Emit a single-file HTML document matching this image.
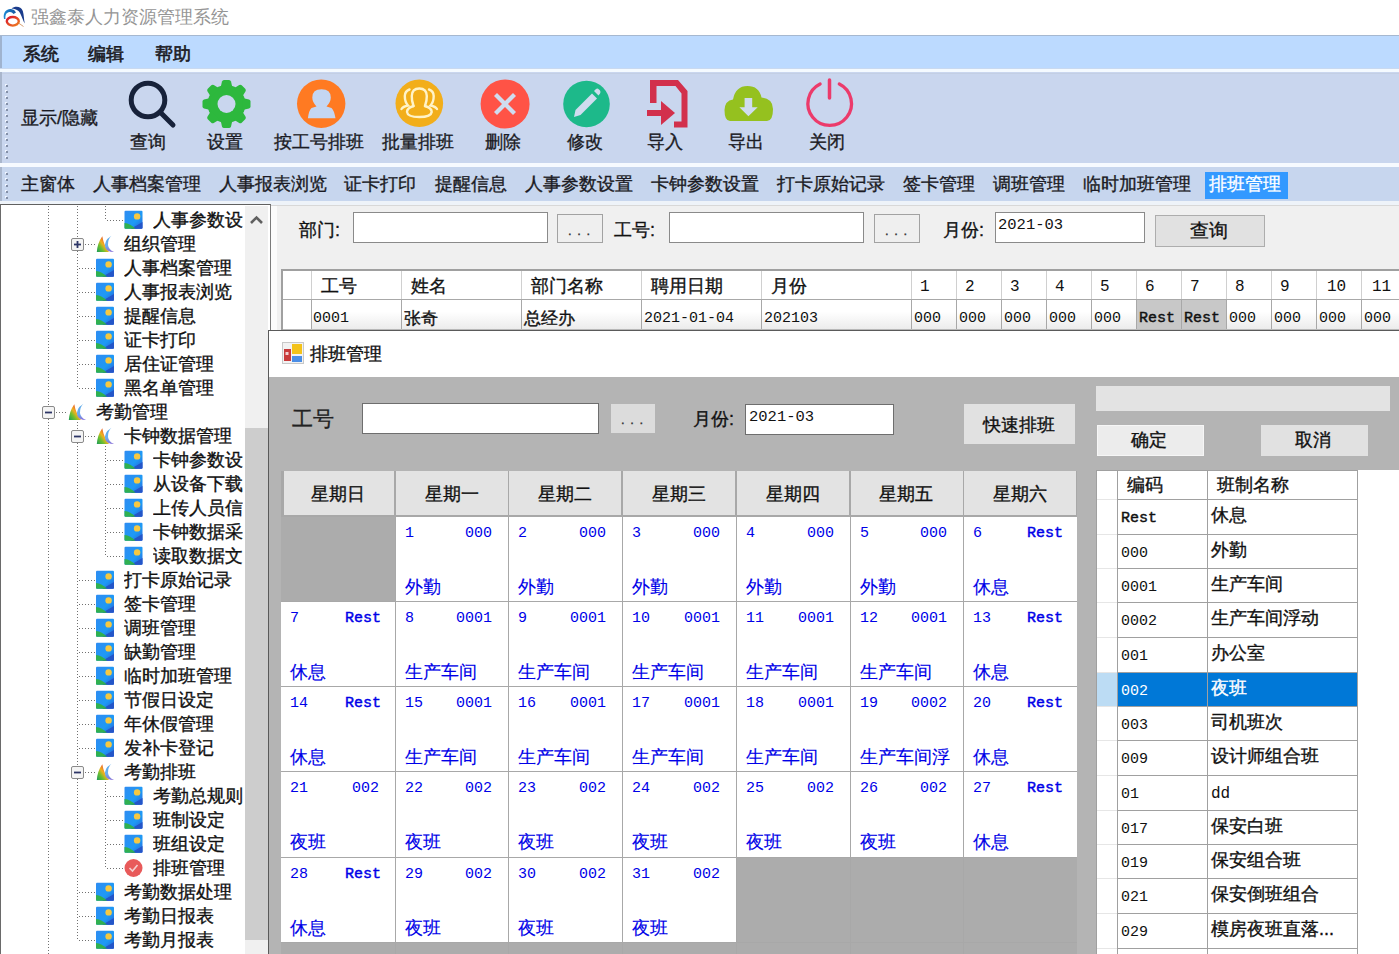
<!DOCTYPE html><html><head><meta charset="utf-8"><style>
html,body{margin:0;padding:0;}
body{width:1399px;height:954px;overflow:hidden;position:relative;background:#fff;font-family:"Liberation Sans", sans-serif;}
.t{position:absolute;white-space:nowrap;line-height:1;-webkit-text-stroke:0.35px currentColor;}
.r{position:absolute;box-sizing:border-box;}
svg{position:absolute;}
</style></head><body><div class="r" style="left:0px;top:0px;width:1399px;height:35px;background:#fff;"></div><svg style="left:0px;top:0px" width="32" height="34" viewBox="0 0 32 34">
<defs><linearGradient id="lg1" x1="0" y1="0" x2="1" y2="0"><stop offset="0" stop-color="#1c8ad6"/><stop offset="1" stop-color="#17569e"/></linearGradient>
<linearGradient id="lg2" x1="0" y1="0" x2="1" y2="1"><stop offset="0" stop-color="#d8122e"/><stop offset="1" stop-color="#f08020"/></linearGradient></defs>
<path d="M4 19 C2.5 12 7 8.5 11 9 C13.5 9.3 15 10.5 16 12.5 L13.5 14 C12.5 12.5 11 11.8 9.5 12 C6.5 12.3 5 15 5.5 19 Z" fill="url(#lg1)"/>
<path d="M11.5 8.5 C15 6 21 6 22.8 11 C24 15 23.8 19 24.8 23.5 C22 18.5 21 13.5 18.5 11 C16.5 9.3 14 8.8 11.5 8.5 Z" fill="#1a3c8c"/>
<ellipse cx="12.8" cy="21.3" rx="6" ry="4.3" fill="none" stroke="url(#lg2)" stroke-width="2.4"/>
<path d="M18.5 23 L23.5 26.5" stroke="#c87a3a" stroke-width="1" opacity="0.7"/>
</svg><div class="t" style="left:31px;top:8px;font-size:18px;color:#959595;-webkit-text-stroke:0;width:198.00px;text-align:justify;text-align-last:justify">强鑫泰人力资源管理系统</div><div class="r" style="left:0px;top:35px;width:1399px;height:34px;background:#bcdaff;"></div><div class="r" style="left:0px;top:35px;width:2px;height:34px;background:#9fb3cf;"></div><div class="r" style="left:0px;top:35px;width:1399px;height:1px;background:#a6b8d0;"></div><div class="t" style="left:23px;top:45px;font-size:18px;color:#1b1b24;-webkit-text-stroke:0.6px currentColor;width:36.00px;text-align:justify;text-align-last:justify">系统</div><div class="t" style="left:88px;top:45px;font-size:18px;color:#1b1b24;-webkit-text-stroke:0.6px currentColor;width:36.00px;text-align:justify;text-align-last:justify">编辑</div><div class="t" style="left:155px;top:45px;font-size:18px;color:#1b1b24;-webkit-text-stroke:0.6px currentColor;width:36.00px;text-align:justify;text-align-last:justify">帮助</div><div class="r" style="left:0px;top:68px;width:1399px;height:1px;background:#c9d9f0;"></div><div class="r" style="left:0px;top:69px;width:1399px;height:3px;background:#f4faff;"></div><div class="r" style="left:0px;top:72px;width:1399px;height:92px;background:#c9d6ee;"></div><div class="r" style="left:0px;top:73px;width:1399px;height:1px;background:#c3cfe4;"></div><div class="r" style="left:0px;top:72px;width:2px;height:92px;background:#a9b6cc;"></div><div class="r" style="left:5px;top:84px;width:2px;height:2px;background:#eef4ff;"></div><div class="r" style="left:6px;top:85px;width:2px;height:2px;background:#8490a8;"></div><div class="r" style="left:5px;top:90px;width:2px;height:2px;background:#eef4ff;"></div><div class="r" style="left:6px;top:91px;width:2px;height:2px;background:#8490a8;"></div><div class="r" style="left:5px;top:96px;width:2px;height:2px;background:#eef4ff;"></div><div class="r" style="left:6px;top:97px;width:2px;height:2px;background:#8490a8;"></div><div class="r" style="left:5px;top:102px;width:2px;height:2px;background:#eef4ff;"></div><div class="r" style="left:6px;top:103px;width:2px;height:2px;background:#8490a8;"></div><div class="r" style="left:5px;top:108px;width:2px;height:2px;background:#eef4ff;"></div><div class="r" style="left:6px;top:109px;width:2px;height:2px;background:#8490a8;"></div><div class="r" style="left:5px;top:114px;width:2px;height:2px;background:#eef4ff;"></div><div class="r" style="left:6px;top:115px;width:2px;height:2px;background:#8490a8;"></div><div class="r" style="left:5px;top:120px;width:2px;height:2px;background:#eef4ff;"></div><div class="r" style="left:6px;top:121px;width:2px;height:2px;background:#8490a8;"></div><div class="r" style="left:5px;top:126px;width:2px;height:2px;background:#eef4ff;"></div><div class="r" style="left:6px;top:127px;width:2px;height:2px;background:#8490a8;"></div><div class="r" style="left:5px;top:132px;width:2px;height:2px;background:#eef4ff;"></div><div class="r" style="left:6px;top:133px;width:2px;height:2px;background:#8490a8;"></div><div class="r" style="left:5px;top:138px;width:2px;height:2px;background:#eef4ff;"></div><div class="r" style="left:6px;top:139px;width:2px;height:2px;background:#8490a8;"></div><div class="r" style="left:5px;top:144px;width:2px;height:2px;background:#eef4ff;"></div><div class="r" style="left:6px;top:145px;width:2px;height:2px;background:#8490a8;"></div><div class="r" style="left:5px;top:150px;width:2px;height:2px;background:#eef4ff;"></div><div class="r" style="left:6px;top:151px;width:2px;height:2px;background:#8490a8;"></div><div class="r" style="left:5px;top:156px;width:2px;height:2px;background:#eef4ff;"></div><div class="r" style="left:6px;top:157px;width:2px;height:2px;background:#8490a8;"></div><div class="t" style="left:21px;top:109px;font-size:18px;color:#1b1b24;;width:77.02px;text-align:justify;text-align-last:justify">显示/隐藏</div><div class="r" style="left:0px;top:163px;width:1399px;height:4px;background:#f6faff;"></div><div class="r" style="left:0px;top:167px;width:1399px;height:35px;background:#c7d6ee;"></div><div class="r" style="left:0px;top:167px;width:2px;height:35px;background:#a9b6cc;"></div><div class="r" style="left:5px;top:172px;width:2px;height:2px;background:#eef4ff;"></div><div class="r" style="left:6px;top:173px;width:2px;height:2px;background:#8490a8;"></div><div class="r" style="left:5px;top:178px;width:2px;height:2px;background:#eef4ff;"></div><div class="r" style="left:6px;top:179px;width:2px;height:2px;background:#8490a8;"></div><div class="r" style="left:5px;top:184px;width:2px;height:2px;background:#eef4ff;"></div><div class="r" style="left:6px;top:185px;width:2px;height:2px;background:#8490a8;"></div><div class="r" style="left:5px;top:190px;width:2px;height:2px;background:#eef4ff;"></div><div class="r" style="left:6px;top:191px;width:2px;height:2px;background:#8490a8;"></div><div class="r" style="left:5px;top:196px;width:2px;height:2px;background:#eef4ff;"></div><div class="r" style="left:6px;top:197px;width:2px;height:2px;background:#8490a8;"></div><div class="r" style="left:0px;top:201px;width:1399px;height:4px;background:#eef3f9;"></div><svg style="left:120px;top:74px" width="740" height="60" viewBox="120 74 740 60">
<circle cx="148" cy="100" r="16.8" fill="none" stroke="#17223a" stroke-width="5"/>
<line x1="161" y1="113" x2="173" y2="125" stroke="#17223a" stroke-width="5" stroke-linecap="round"/>
<g fill="#2db83d" transform="translate(226.5,104)">
  <circle r="19"/>
  <path d="M-6 -16 L-4.5 -22.5 Q-4 -24 -2.5 -24 L2.5 -24 Q4 -24 4.5 -22.5 L6 -16 Z" transform="rotate(0)"/><path d="M-6 -16 L-4.5 -22.5 Q-4 -24 -2.5 -24 L2.5 -24 Q4 -24 4.5 -22.5 L6 -16 Z" transform="rotate(45)"/><path d="M-6 -16 L-4.5 -22.5 Q-4 -24 -2.5 -24 L2.5 -24 Q4 -24 4.5 -22.5 L6 -16 Z" transform="rotate(90)"/><path d="M-6 -16 L-4.5 -22.5 Q-4 -24 -2.5 -24 L2.5 -24 Q4 -24 4.5 -22.5 L6 -16 Z" transform="rotate(135)"/><path d="M-6 -16 L-4.5 -22.5 Q-4 -24 -2.5 -24 L2.5 -24 Q4 -24 4.5 -22.5 L6 -16 Z" transform="rotate(180)"/><path d="M-6 -16 L-4.5 -22.5 Q-4 -24 -2.5 -24 L2.5 -24 Q4 -24 4.5 -22.5 L6 -16 Z" transform="rotate(225)"/><path d="M-6 -16 L-4.5 -22.5 Q-4 -24 -2.5 -24 L2.5 -24 Q4 -24 4.5 -22.5 L6 -16 Z" transform="rotate(270)"/><path d="M-6 -16 L-4.5 -22.5 Q-4 -24 -2.5 -24 L2.5 -24 Q4 -24 4.5 -22.5 L6 -16 Z" transform="rotate(315)"/>
  <circle r="9" fill="#c9d6ee"/>
</g>
<circle cx="321.2" cy="103.7" r="24.2" fill="#ff7a22"/>
<path d="M316.5 106.5 Q312.3 102 312.3 97.5 Q312.3 89.2 321.5 89.2 Q330.8 89.2 330.8 97.5 Q330.8 102 326.5 106.5 L331.5 108 Q334 110 335.5 118.3 L307.9 118.3 Q309 110 311.5 108 Z" fill="#c4d6f2"/>
<circle cx="419.3" cy="103.3" r="23.8" fill="#f2ae1a"/>
<g fill="none" stroke="#fff3c8" stroke-width="2.4" stroke-linecap="round">
<path d="M413.5 106 Q411.5 100 411.8 96 Q412 88.5 419.3 88.5 Q426.6 88.5 426.8 96 Q427 100 425 106"/>
<path d="M413.5 106 Q407 108 407 112 Q407.5 117 419.3 117 Q431 117 431.7 112 Q431.7 108 425 106"/>
<path d="M409.5 89.5 Q405 91 404.8 96 Q404.8 102 408 105.5 Q403 106.5 401.5 109"/>
<path d="M429 89.5 Q433.5 91 433.7 96 Q433.7 102 430.5 105.5 Q435.5 106.5 437 109"/>
</g>
<circle cx="505.1" cy="104" r="24.5" fill="#ff5346"/>
<g stroke="#cfdcef" stroke-width="4.2" stroke-linecap="butt">
<line x1="495.5" y1="94.5" x2="514.5" y2="113.5"/><line x1="514.5" y1="94.5" x2="495.5" y2="113.5"/>
</g>
<circle cx="586.5" cy="104" r="23.3" fill="#1db98a"/>
<path d="M574 117 L575.5 110 L592 93.5 L597 98.5 L580.5 115 Z" fill="#cfdcef"/>
<path d="M594 91 L596 89 Q597.5 88 599 89.5 L600 90.5 Q601 92 600 93.5 L598.5 95.5 Z" fill="#cfdcef"/>
<g fill="#d2304c">
<path d="M650 80 L678 80 L687.5 91 L687.5 127.5 L674 127.5 L674 121.5 L681.5 121.5 L681.5 93.5 L675.5 86 L656.5 86 L656.5 103 L650 103 Z"/>
<rect x="647" y="110" width="15" height="6"/>
<path d="M661 101 L675 113 L661 125 Z"/>
</g>
<path d="M730 121 Q724.5 121 724.5 110 Q725 100.5 733 99.5 Q735.5 86 747.5 86 Q759 86 761.5 97.5 Q772.8 98.5 773 109 Q773 121 767 121 Z" fill="#95c11f"/><path d="M744.6 98 L752.2 98 L752.2 107.3 L757.7 107.3 L748.4 116.2 L739.4 107.3 L744.6 107.3 Z" fill="#cfdcef"/>
<path d="M820.1 84 A21.8 21.8 0 1 0 839.3 84" fill="none" stroke="#ec3b6b" stroke-width="3.3" stroke-linecap="round"/>
<line x1="829.5" y1="80" x2="829.5" y2="98" stroke="#ec3b6b" stroke-width="3.5" stroke-linecap="round"/>
</svg><div class="t" style="left:130px;top:133px;font-size:18px;color:#1b1b24;;width:36.00px;text-align:justify;text-align-last:justify">查询</div><div class="t" style="left:207px;top:133px;font-size:18px;color:#1b1b24;;width:36.00px;text-align:justify;text-align-last:justify">设置</div><div class="t" style="left:274px;top:133px;font-size:18px;color:#1b1b24;;width:90.00px;text-align:justify;text-align-last:justify">按工号排班</div><div class="t" style="left:382px;top:133px;font-size:18px;color:#1b1b24;;width:72.00px;text-align:justify;text-align-last:justify">批量排班</div><div class="t" style="left:485px;top:133px;font-size:18px;color:#1b1b24;;width:36.00px;text-align:justify;text-align-last:justify">删除</div><div class="t" style="left:567px;top:133px;font-size:18px;color:#1b1b24;;width:36.00px;text-align:justify;text-align-last:justify">修改</div><div class="t" style="left:647px;top:133px;font-size:18px;color:#1b1b24;;width:36.00px;text-align:justify;text-align-last:justify">导入</div><div class="t" style="left:728px;top:133px;font-size:18px;color:#1b1b24;;width:36.00px;text-align:justify;text-align-last:justify">导出</div><div class="t" style="left:809px;top:133px;font-size:18px;color:#1b1b24;;width:36.00px;text-align:justify;text-align-last:justify">关闭</div><div class="t" style="left:21px;top:175px;font-size:18px;color:#1b1b24;;width:54.00px;text-align:justify;text-align-last:justify">主窗体</div><div class="t" style="left:93px;top:175px;font-size:18px;color:#1b1b24;;width:108.00px;text-align:justify;text-align-last:justify">人事档案管理</div><div class="t" style="left:219px;top:175px;font-size:18px;color:#1b1b24;;width:108.00px;text-align:justify;text-align-last:justify">人事报表浏览</div><div class="t" style="left:344px;top:175px;font-size:18px;color:#1b1b24;;width:72.00px;text-align:justify;text-align-last:justify">证卡打印</div><div class="t" style="left:435px;top:175px;font-size:18px;color:#1b1b24;;width:72.00px;text-align:justify;text-align-last:justify">提醒信息</div><div class="t" style="left:525px;top:175px;font-size:18px;color:#1b1b24;;width:108.00px;text-align:justify;text-align-last:justify">人事参数设置</div><div class="t" style="left:651px;top:175px;font-size:18px;color:#1b1b24;;width:108.00px;text-align:justify;text-align-last:justify">卡钟参数设置</div><div class="t" style="left:777px;top:175px;font-size:18px;color:#1b1b24;;width:108.00px;text-align:justify;text-align-last:justify">打卡原始记录</div><div class="t" style="left:903px;top:175px;font-size:18px;color:#1b1b24;;width:72.00px;text-align:justify;text-align-last:justify">签卡管理</div><div class="t" style="left:993px;top:175px;font-size:18px;color:#1b1b24;;width:72.00px;text-align:justify;text-align-last:justify">调班管理</div><div class="t" style="left:1083px;top:175px;font-size:18px;color:#1b1b24;;width:108.00px;text-align:justify;text-align-last:justify">临时加班管理</div><div class="r" style="left:1205px;top:172px;width:83px;height:27px;background:#3399ff;"></div><div class="t" style="left:1209px;top:175px;font-size:18px;color:#ffffff;;width:72.00px;text-align:justify;text-align-last:justify">排班管理</div><div class="r" style="left:0px;top:204px;width:271px;height:750px;background:#ffffff;border-top:1.5px solid #606060;border-right:1px solid #7a7a7a;border-left:1px solid #6a6a6a"></div><div class="r" style="left:245px;top:206px;width:23px;height:748px;background:#f0f0f0;"></div><div class="r" style="left:245px;top:428px;width:23px;height:512px;background:#cdcdcd;"></div><svg style="left:248px;top:213px" width="17" height="14" viewBox="0 0 17 14"><path d="M3 10 L8.5 4.5 L14 10" fill="none" stroke="#606060" stroke-width="2.6"/></svg><svg style="left:0px;top:206px" width="245" height="748" viewBox="0 206 245 748"><defs><linearGradient id="gimg" x1="0" y1="0" x2="1" y2="1"><stop offset="0" stop-color="#2f8cf2"/><stop offset="0.6" stop-color="#1e9af5"/><stop offset="1" stop-color="#2a5fd8"/></linearGradient><linearGradient id="gk1" x1="0" y1="1" x2="1" y2="0"><stop offset="0" stop-color="#1a9a5a"/><stop offset="0.3" stop-color="#6cc030"/><stop offset="0.5" stop-color="#f0b020"/><stop offset="0.75" stop-color="#e85a30"/><stop offset="1" stop-color="#c83a5a"/></linearGradient><linearGradient id="gk2" x1="0" y1="0" x2="0" y2="1"><stop offset="0" stop-color="#5aa8e8"/><stop offset="0.6" stop-color="#6ab0f0"/><stop offset="1" stop-color="#8a70d8"/></linearGradient></defs><line x1="48.5" y1="206" x2="48.5" y2="954" stroke="#707070" stroke-width="1" stroke-dasharray="1 2"/><line x1="77.5" y1="206" x2="77.5" y2="389" stroke="#707070" stroke-width="1" stroke-dasharray="1 2"/><line x1="77.5" y1="422" x2="77.5" y2="430" stroke="#707070" stroke-width="1" stroke-dasharray="1 2"/><line x1="77.5" y1="443" x2="77.5" y2="766" stroke="#707070" stroke-width="1" stroke-dasharray="1 2"/><line x1="77.5" y1="779" x2="77.5" y2="941" stroke="#707070" stroke-width="1" stroke-dasharray="1 2"/><line x1="105.5" y1="206" x2="105.5" y2="221" stroke="#707070" stroke-width="1" stroke-dasharray="1 2"/><line x1="105.5" y1="446" x2="105.5" y2="557" stroke="#707070" stroke-width="1" stroke-dasharray="1 2"/><line x1="105.5" y1="782" x2="105.5" y2="869" stroke="#707070" stroke-width="1" stroke-dasharray="1 2"/><line x1="48.5" y1="406" x2="48.5" y2="419" stroke="#fff" stroke-width="1"/><line x1="107.0" y1="220.5" x2="123.5" y2="220.5" stroke="#707070" stroke-width="1" stroke-dasharray="1 2"/><rect x="124.5" y="210.7" width="18" height="18" rx="1" fill="url(#gimg)"/><path d="M130.5 229 L142.5 222 L142.5 227.7 Q142.5 228.7 141.5 228.7 Z" fill="#2456c8"/><path d="M124.5 223 Q130.5 223.5 135.5 228.7 L125.5 228.7 Q124.5 228.7 124.5 227.7 Z" fill="#30b050"/><circle cx="137.1" cy="216.4" r="3.2" fill="#f5c842"/><line x1="85.0" y1="244.5" x2="95" y2="244.5" stroke="#707070" stroke-width="1" stroke-dasharray="1 2"/><rect x="71.5" y="238.5" width="12" height="12" rx="1.5" fill="#f4f4f4" stroke="#8a8a8a"/><line x1="74.0" y1="244.5" x2="81.0" y2="244.5" stroke="#2d3566" stroke-width="1.8"/><line x1="77.5" y1="241" x2="77.5" y2="248" stroke="#2d3566" stroke-width="1.8"/><path d="M96.8 252 Q97.5 243 102.3 236.3 Q104 246 109 252 Z" fill="url(#gk1)"/><path d="M111.5 235.7 Q103 241 105.5 248 Q107.5 252.2 114 252 Q108.5 249.5 108 245 Q107.8 239 111.5 235.7 Z" fill="url(#gk2)"/><line x1="79.0" y1="268.5" x2="95" y2="268.5" stroke="#707070" stroke-width="1" stroke-dasharray="1 2"/><rect x="96" y="258.7" width="18" height="18" rx="1" fill="url(#gimg)"/><path d="M102 277 L114 270 L114 275.7 Q114 276.7 113 276.7 Z" fill="#2456c8"/><path d="M96 271 Q102 271.5 107 276.7 L97 276.7 Q96 276.7 96 275.7 Z" fill="#30b050"/><circle cx="108.6" cy="264.4" r="3.2" fill="#f5c842"/><line x1="79.0" y1="292.5" x2="95" y2="292.5" stroke="#707070" stroke-width="1" stroke-dasharray="1 2"/><rect x="96" y="282.7" width="18" height="18" rx="1" fill="url(#gimg)"/><path d="M102 301 L114 294 L114 299.7 Q114 300.7 113 300.7 Z" fill="#2456c8"/><path d="M96 295 Q102 295.5 107 300.7 L97 300.7 Q96 300.7 96 299.7 Z" fill="#30b050"/><circle cx="108.6" cy="288.4" r="3.2" fill="#f5c842"/><line x1="79.0" y1="316.5" x2="95" y2="316.5" stroke="#707070" stroke-width="1" stroke-dasharray="1 2"/><rect x="96" y="306.7" width="18" height="18" rx="1" fill="url(#gimg)"/><path d="M102 325 L114 318 L114 323.7 Q114 324.7 113 324.7 Z" fill="#2456c8"/><path d="M96 319 Q102 319.5 107 324.7 L97 324.7 Q96 324.7 96 323.7 Z" fill="#30b050"/><circle cx="108.6" cy="312.4" r="3.2" fill="#f5c842"/><line x1="79.0" y1="340.5" x2="95" y2="340.5" stroke="#707070" stroke-width="1" stroke-dasharray="1 2"/><rect x="96" y="330.7" width="18" height="18" rx="1" fill="url(#gimg)"/><path d="M102 349 L114 342 L114 347.7 Q114 348.7 113 348.7 Z" fill="#2456c8"/><path d="M96 343 Q102 343.5 107 348.7 L97 348.7 Q96 348.7 96 347.7 Z" fill="#30b050"/><circle cx="108.6" cy="336.4" r="3.2" fill="#f5c842"/><line x1="79.0" y1="364.5" x2="95" y2="364.5" stroke="#707070" stroke-width="1" stroke-dasharray="1 2"/><rect x="96" y="354.7" width="18" height="18" rx="1" fill="url(#gimg)"/><path d="M102 373 L114 366 L114 371.7 Q114 372.7 113 372.7 Z" fill="#2456c8"/><path d="M96 367 Q102 367.5 107 372.7 L97 372.7 Q96 372.7 96 371.7 Z" fill="#30b050"/><circle cx="108.6" cy="360.4" r="3.2" fill="#f5c842"/><line x1="79.0" y1="388.5" x2="95" y2="388.5" stroke="#707070" stroke-width="1" stroke-dasharray="1 2"/><rect x="96" y="378.7" width="18" height="18" rx="1" fill="url(#gimg)"/><path d="M102 397 L114 390 L114 395.7 Q114 396.7 113 396.7 Z" fill="#2456c8"/><path d="M96 391 Q102 391.5 107 396.7 L97 396.7 Q96 396.7 96 395.7 Z" fill="#30b050"/><circle cx="108.6" cy="384.4" r="3.2" fill="#f5c842"/><line x1="56.0" y1="412.5" x2="67" y2="412.5" stroke="#707070" stroke-width="1" stroke-dasharray="1 2"/><rect x="42.5" y="406.5" width="12" height="12" rx="1.5" fill="#f4f4f4" stroke="#8a8a8a"/><line x1="45.0" y1="412.5" x2="52.0" y2="412.5" stroke="#2d3566" stroke-width="1.8"/><path d="M68.8 420 Q69.5 411 74.3 404.3 Q76 414 81 420 Z" fill="url(#gk1)"/><path d="M83.5 403.7 Q75 409 77.5 416 Q79.5 420.2 86 420 Q80.5 417.5 80 413 Q79.8 407 83.5 403.7 Z" fill="url(#gk2)"/><line x1="85.0" y1="436.5" x2="95" y2="436.5" stroke="#707070" stroke-width="1" stroke-dasharray="1 2"/><rect x="71.5" y="430.5" width="12" height="12" rx="1.5" fill="#f4f4f4" stroke="#8a8a8a"/><line x1="74.0" y1="436.5" x2="81.0" y2="436.5" stroke="#2d3566" stroke-width="1.8"/><path d="M96.8 444 Q97.5 435 102.3 428.3 Q104 438 109 444 Z" fill="url(#gk1)"/><path d="M111.5 427.7 Q103 433 105.5 440 Q107.5 444.2 114 444 Q108.5 441.5 108 437 Q107.8 431 111.5 427.7 Z" fill="url(#gk2)"/><line x1="107.0" y1="460.5" x2="123.5" y2="460.5" stroke="#707070" stroke-width="1" stroke-dasharray="1 2"/><rect x="124.5" y="450.7" width="18" height="18" rx="1" fill="url(#gimg)"/><path d="M130.5 469 L142.5 462 L142.5 467.7 Q142.5 468.7 141.5 468.7 Z" fill="#2456c8"/><path d="M124.5 463 Q130.5 463.5 135.5 468.7 L125.5 468.7 Q124.5 468.7 124.5 467.7 Z" fill="#30b050"/><circle cx="137.1" cy="456.4" r="3.2" fill="#f5c842"/><line x1="107.0" y1="484.5" x2="123.5" y2="484.5" stroke="#707070" stroke-width="1" stroke-dasharray="1 2"/><rect x="124.5" y="474.7" width="18" height="18" rx="1" fill="url(#gimg)"/><path d="M130.5 493 L142.5 486 L142.5 491.7 Q142.5 492.7 141.5 492.7 Z" fill="#2456c8"/><path d="M124.5 487 Q130.5 487.5 135.5 492.7 L125.5 492.7 Q124.5 492.7 124.5 491.7 Z" fill="#30b050"/><circle cx="137.1" cy="480.4" r="3.2" fill="#f5c842"/><line x1="107.0" y1="508.5" x2="123.5" y2="508.5" stroke="#707070" stroke-width="1" stroke-dasharray="1 2"/><rect x="124.5" y="498.7" width="18" height="18" rx="1" fill="url(#gimg)"/><path d="M130.5 517 L142.5 510 L142.5 515.7 Q142.5 516.7 141.5 516.7 Z" fill="#2456c8"/><path d="M124.5 511 Q130.5 511.5 135.5 516.7 L125.5 516.7 Q124.5 516.7 124.5 515.7 Z" fill="#30b050"/><circle cx="137.1" cy="504.4" r="3.2" fill="#f5c842"/><line x1="107.0" y1="532.5" x2="123.5" y2="532.5" stroke="#707070" stroke-width="1" stroke-dasharray="1 2"/><rect x="124.5" y="522.7" width="18" height="18" rx="1" fill="url(#gimg)"/><path d="M130.5 541 L142.5 534 L142.5 539.7 Q142.5 540.7 141.5 540.7 Z" fill="#2456c8"/><path d="M124.5 535 Q130.5 535.5 135.5 540.7 L125.5 540.7 Q124.5 540.7 124.5 539.7 Z" fill="#30b050"/><circle cx="137.1" cy="528.4" r="3.2" fill="#f5c842"/><line x1="107.0" y1="556.5" x2="123.5" y2="556.5" stroke="#707070" stroke-width="1" stroke-dasharray="1 2"/><rect x="124.5" y="546.7" width="18" height="18" rx="1" fill="url(#gimg)"/><path d="M130.5 565 L142.5 558 L142.5 563.7 Q142.5 564.7 141.5 564.7 Z" fill="#2456c8"/><path d="M124.5 559 Q130.5 559.5 135.5 564.7 L125.5 564.7 Q124.5 564.7 124.5 563.7 Z" fill="#30b050"/><circle cx="137.1" cy="552.4" r="3.2" fill="#f5c842"/><line x1="79.0" y1="580.5" x2="95" y2="580.5" stroke="#707070" stroke-width="1" stroke-dasharray="1 2"/><rect x="96" y="570.7" width="18" height="18" rx="1" fill="url(#gimg)"/><path d="M102 589 L114 582 L114 587.7 Q114 588.7 113 588.7 Z" fill="#2456c8"/><path d="M96 583 Q102 583.5 107 588.7 L97 588.7 Q96 588.7 96 587.7 Z" fill="#30b050"/><circle cx="108.6" cy="576.4" r="3.2" fill="#f5c842"/><line x1="79.0" y1="604.5" x2="95" y2="604.5" stroke="#707070" stroke-width="1" stroke-dasharray="1 2"/><rect x="96" y="594.7" width="18" height="18" rx="1" fill="url(#gimg)"/><path d="M102 613 L114 606 L114 611.7 Q114 612.7 113 612.7 Z" fill="#2456c8"/><path d="M96 607 Q102 607.5 107 612.7 L97 612.7 Q96 612.7 96 611.7 Z" fill="#30b050"/><circle cx="108.6" cy="600.4" r="3.2" fill="#f5c842"/><line x1="79.0" y1="628.5" x2="95" y2="628.5" stroke="#707070" stroke-width="1" stroke-dasharray="1 2"/><rect x="96" y="618.7" width="18" height="18" rx="1" fill="url(#gimg)"/><path d="M102 637 L114 630 L114 635.7 Q114 636.7 113 636.7 Z" fill="#2456c8"/><path d="M96 631 Q102 631.5 107 636.7 L97 636.7 Q96 636.7 96 635.7 Z" fill="#30b050"/><circle cx="108.6" cy="624.4" r="3.2" fill="#f5c842"/><line x1="79.0" y1="652.5" x2="95" y2="652.5" stroke="#707070" stroke-width="1" stroke-dasharray="1 2"/><rect x="96" y="642.7" width="18" height="18" rx="1" fill="url(#gimg)"/><path d="M102 661 L114 654 L114 659.7 Q114 660.7 113 660.7 Z" fill="#2456c8"/><path d="M96 655 Q102 655.5 107 660.7 L97 660.7 Q96 660.7 96 659.7 Z" fill="#30b050"/><circle cx="108.6" cy="648.4" r="3.2" fill="#f5c842"/><line x1="79.0" y1="676.5" x2="95" y2="676.5" stroke="#707070" stroke-width="1" stroke-dasharray="1 2"/><rect x="96" y="666.7" width="18" height="18" rx="1" fill="url(#gimg)"/><path d="M102 685 L114 678 L114 683.7 Q114 684.7 113 684.7 Z" fill="#2456c8"/><path d="M96 679 Q102 679.5 107 684.7 L97 684.7 Q96 684.7 96 683.7 Z" fill="#30b050"/><circle cx="108.6" cy="672.4" r="3.2" fill="#f5c842"/><line x1="79.0" y1="700.5" x2="95" y2="700.5" stroke="#707070" stroke-width="1" stroke-dasharray="1 2"/><rect x="96" y="690.7" width="18" height="18" rx="1" fill="url(#gimg)"/><path d="M102 709 L114 702 L114 707.7 Q114 708.7 113 708.7 Z" fill="#2456c8"/><path d="M96 703 Q102 703.5 107 708.7 L97 708.7 Q96 708.7 96 707.7 Z" fill="#30b050"/><circle cx="108.6" cy="696.4" r="3.2" fill="#f5c842"/><line x1="79.0" y1="724.5" x2="95" y2="724.5" stroke="#707070" stroke-width="1" stroke-dasharray="1 2"/><rect x="96" y="714.7" width="18" height="18" rx="1" fill="url(#gimg)"/><path d="M102 733 L114 726 L114 731.7 Q114 732.7 113 732.7 Z" fill="#2456c8"/><path d="M96 727 Q102 727.5 107 732.7 L97 732.7 Q96 732.7 96 731.7 Z" fill="#30b050"/><circle cx="108.6" cy="720.4" r="3.2" fill="#f5c842"/><line x1="79.0" y1="748.5" x2="95" y2="748.5" stroke="#707070" stroke-width="1" stroke-dasharray="1 2"/><rect x="96" y="738.7" width="18" height="18" rx="1" fill="url(#gimg)"/><path d="M102 757 L114 750 L114 755.7 Q114 756.7 113 756.7 Z" fill="#2456c8"/><path d="M96 751 Q102 751.5 107 756.7 L97 756.7 Q96 756.7 96 755.7 Z" fill="#30b050"/><circle cx="108.6" cy="744.4" r="3.2" fill="#f5c842"/><line x1="85.0" y1="772.5" x2="95" y2="772.5" stroke="#707070" stroke-width="1" stroke-dasharray="1 2"/><rect x="71.5" y="766.5" width="12" height="12" rx="1.5" fill="#f4f4f4" stroke="#8a8a8a"/><line x1="74.0" y1="772.5" x2="81.0" y2="772.5" stroke="#2d3566" stroke-width="1.8"/><path d="M96.8 780 Q97.5 771 102.3 764.3 Q104 774 109 780 Z" fill="url(#gk1)"/><path d="M111.5 763.7 Q103 769 105.5 776 Q107.5 780.2 114 780 Q108.5 777.5 108 773 Q107.8 767 111.5 763.7 Z" fill="url(#gk2)"/><line x1="107.0" y1="796.5" x2="123.5" y2="796.5" stroke="#707070" stroke-width="1" stroke-dasharray="1 2"/><rect x="124.5" y="786.7" width="18" height="18" rx="1" fill="url(#gimg)"/><path d="M130.5 805 L142.5 798 L142.5 803.7 Q142.5 804.7 141.5 804.7 Z" fill="#2456c8"/><path d="M124.5 799 Q130.5 799.5 135.5 804.7 L125.5 804.7 Q124.5 804.7 124.5 803.7 Z" fill="#30b050"/><circle cx="137.1" cy="792.4" r="3.2" fill="#f5c842"/><line x1="107.0" y1="820.5" x2="123.5" y2="820.5" stroke="#707070" stroke-width="1" stroke-dasharray="1 2"/><rect x="124.5" y="810.7" width="18" height="18" rx="1" fill="url(#gimg)"/><path d="M130.5 829 L142.5 822 L142.5 827.7 Q142.5 828.7 141.5 828.7 Z" fill="#2456c8"/><path d="M124.5 823 Q130.5 823.5 135.5 828.7 L125.5 828.7 Q124.5 828.7 124.5 827.7 Z" fill="#30b050"/><circle cx="137.1" cy="816.4" r="3.2" fill="#f5c842"/><line x1="107.0" y1="844.5" x2="123.5" y2="844.5" stroke="#707070" stroke-width="1" stroke-dasharray="1 2"/><rect x="124.5" y="834.7" width="18" height="18" rx="1" fill="url(#gimg)"/><path d="M130.5 853 L142.5 846 L142.5 851.7 Q142.5 852.7 141.5 852.7 Z" fill="#2456c8"/><path d="M124.5 847 Q130.5 847.5 135.5 852.7 L125.5 852.7 Q124.5 852.7 124.5 851.7 Z" fill="#30b050"/><circle cx="137.1" cy="840.4" r="3.2" fill="#f5c842"/><line x1="107.0" y1="868.5" x2="123.5" y2="868.5" stroke="#707070" stroke-width="1" stroke-dasharray="1 2"/><circle cx="133.5" cy="868" r="9" fill="#e85a5a"/><path d="M129.5 868 L132.5 871 L137.5 865" fill="none" stroke="#f5d0d0" stroke-width="1.6"/><line x1="79.0" y1="892.5" x2="95" y2="892.5" stroke="#707070" stroke-width="1" stroke-dasharray="1 2"/><rect x="96" y="882.7" width="18" height="18" rx="1" fill="url(#gimg)"/><path d="M102 901 L114 894 L114 899.7 Q114 900.7 113 900.7 Z" fill="#2456c8"/><path d="M96 895 Q102 895.5 107 900.7 L97 900.7 Q96 900.7 96 899.7 Z" fill="#30b050"/><circle cx="108.6" cy="888.4" r="3.2" fill="#f5c842"/><line x1="79.0" y1="916.5" x2="95" y2="916.5" stroke="#707070" stroke-width="1" stroke-dasharray="1 2"/><rect x="96" y="906.7" width="18" height="18" rx="1" fill="url(#gimg)"/><path d="M102 925 L114 918 L114 923.7 Q114 924.7 113 924.7 Z" fill="#2456c8"/><path d="M96 919 Q102 919.5 107 924.7 L97 924.7 Q96 924.7 96 923.7 Z" fill="#30b050"/><circle cx="108.6" cy="912.4" r="3.2" fill="#f5c842"/><line x1="79.0" y1="940.5" x2="95" y2="940.5" stroke="#707070" stroke-width="1" stroke-dasharray="1 2"/><rect x="96" y="930.7" width="18" height="18" rx="1" fill="url(#gimg)"/><path d="M102 949 L114 942 L114 947.7 Q114 948.7 113 948.7 Z" fill="#2456c8"/><path d="M96 943 Q102 943.5 107 948.7 L97 948.7 Q96 948.7 96 947.7 Z" fill="#30b050"/><circle cx="108.6" cy="936.4" r="3.2" fill="#f5c842"/></svg><div class="t" style="left:153px;top:211px;font-size:18px;color:#111;max-width:92px;overflow:hidden;width:90.00px;text-align:justify;text-align-last:justify">人事参数设</div><div class="t" style="left:124px;top:235px;font-size:18px;color:#111;max-width:120px;overflow:hidden;width:72.00px;text-align:justify;text-align-last:justify">组织管理</div><div class="t" style="left:124px;top:259px;font-size:18px;color:#111;max-width:120px;overflow:hidden;width:108.00px;text-align:justify;text-align-last:justify">人事档案管理</div><div class="t" style="left:124px;top:283px;font-size:18px;color:#111;max-width:120px;overflow:hidden;width:108.00px;text-align:justify;text-align-last:justify">人事报表浏览</div><div class="t" style="left:124px;top:307px;font-size:18px;color:#111;max-width:120px;overflow:hidden;width:72.00px;text-align:justify;text-align-last:justify">提醒信息</div><div class="t" style="left:124px;top:331px;font-size:18px;color:#111;max-width:120px;overflow:hidden;width:72.00px;text-align:justify;text-align-last:justify">证卡打印</div><div class="t" style="left:124px;top:355px;font-size:18px;color:#111;max-width:120px;overflow:hidden;width:90.00px;text-align:justify;text-align-last:justify">居住证管理</div><div class="t" style="left:124px;top:379px;font-size:18px;color:#111;max-width:120px;overflow:hidden;width:90.00px;text-align:justify;text-align-last:justify">黑名单管理</div><div class="t" style="left:96px;top:403px;font-size:18px;color:#111;max-width:149px;overflow:hidden;width:72.00px;text-align:justify;text-align-last:justify">考勤管理</div><div class="t" style="left:124px;top:427px;font-size:18px;color:#111;max-width:120px;overflow:hidden;width:108.00px;text-align:justify;text-align-last:justify">卡钟数据管理</div><div class="t" style="left:153px;top:451px;font-size:18px;color:#111;max-width:92px;overflow:hidden;width:90.00px;text-align:justify;text-align-last:justify">卡钟参数设</div><div class="t" style="left:153px;top:475px;font-size:18px;color:#111;max-width:92px;overflow:hidden;width:90.00px;text-align:justify;text-align-last:justify">从设备下载</div><div class="t" style="left:153px;top:499px;font-size:18px;color:#111;max-width:92px;overflow:hidden;width:90.00px;text-align:justify;text-align-last:justify">上传人员信</div><div class="t" style="left:153px;top:523px;font-size:18px;color:#111;max-width:92px;overflow:hidden;width:90.00px;text-align:justify;text-align-last:justify">卡钟数据采</div><div class="t" style="left:153px;top:547px;font-size:18px;color:#111;max-width:92px;overflow:hidden;width:90.00px;text-align:justify;text-align-last:justify">读取数据文</div><div class="t" style="left:124px;top:571px;font-size:18px;color:#111;max-width:120px;overflow:hidden;width:108.00px;text-align:justify;text-align-last:justify">打卡原始记录</div><div class="t" style="left:124px;top:595px;font-size:18px;color:#111;max-width:120px;overflow:hidden;width:72.00px;text-align:justify;text-align-last:justify">签卡管理</div><div class="t" style="left:124px;top:619px;font-size:18px;color:#111;max-width:120px;overflow:hidden;width:72.00px;text-align:justify;text-align-last:justify">调班管理</div><div class="t" style="left:124px;top:643px;font-size:18px;color:#111;max-width:120px;overflow:hidden;width:72.00px;text-align:justify;text-align-last:justify">缺勤管理</div><div class="t" style="left:124px;top:667px;font-size:18px;color:#111;max-width:120px;overflow:hidden;width:108.00px;text-align:justify;text-align-last:justify">临时加班管理</div><div class="t" style="left:124px;top:691px;font-size:18px;color:#111;max-width:120px;overflow:hidden;width:90.00px;text-align:justify;text-align-last:justify">节假日设定</div><div class="t" style="left:124px;top:715px;font-size:18px;color:#111;max-width:120px;overflow:hidden;width:90.00px;text-align:justify;text-align-last:justify">年休假管理</div><div class="t" style="left:124px;top:739px;font-size:18px;color:#111;max-width:120px;overflow:hidden;width:90.00px;text-align:justify;text-align-last:justify">发补卡登记</div><div class="t" style="left:124px;top:763px;font-size:18px;color:#111;max-width:120px;overflow:hidden;width:72.00px;text-align:justify;text-align-last:justify">考勤排班</div><div class="t" style="left:153px;top:787px;font-size:18px;color:#111;max-width:92px;overflow:hidden;width:90.00px;text-align:justify;text-align-last:justify">考勤总规则</div><div class="t" style="left:153px;top:811px;font-size:18px;color:#111;max-width:92px;overflow:hidden;width:72.00px;text-align:justify;text-align-last:justify">班制设定</div><div class="t" style="left:153px;top:835px;font-size:18px;color:#111;max-width:92px;overflow:hidden;width:72.00px;text-align:justify;text-align-last:justify">班组设定</div><div class="t" style="left:153px;top:859px;font-size:18px;color:#111;max-width:92px;overflow:hidden;width:72.00px;text-align:justify;text-align-last:justify">排班管理</div><div class="t" style="left:124px;top:883px;font-size:18px;color:#111;max-width:120px;overflow:hidden;width:108.00px;text-align:justify;text-align-last:justify">考勤数据处理</div><div class="t" style="left:124px;top:907px;font-size:18px;color:#111;max-width:120px;overflow:hidden;width:90.00px;text-align:justify;text-align-last:justify">考勤日报表</div><div class="t" style="left:124px;top:931px;font-size:18px;color:#111;max-width:120px;overflow:hidden;width:90.00px;text-align:justify;text-align-last:justify">考勤月报表</div><div class="r" style="left:271px;top:205px;width:1128px;height:749px;background:#f0f0f0;border-top:1px solid #d8d8d8"></div><div class="r" style="left:271px;top:206px;width:6px;height:748px;background:#fbfbfb;"></div><div class="t" style="left:299px;top:221px;font-size:18px;color:#111;;width:41.02px;text-align:justify;text-align-last:justify">部门:</div><div class="r" style="left:353px;top:212px;width:195px;height:31px;background:#fff;border:1.5px solid #8a8a8a"></div><div class="r" style="left:557px;top:214px;width:46px;height:29px;background:#efefef;border:1.5px solid #a2a2a2"></div><div class="t" style="left:568px;top:224px;font-size:13px;color:#333;letter-spacing:1px">. . .</div><div class="t" style="left:614px;top:221px;font-size:18px;color:#111;;width:41.02px;text-align:justify;text-align-last:justify">工号:</div><div class="r" style="left:669px;top:212px;width:195px;height:31px;background:#fff;border:1.5px solid #8a8a8a"></div><div class="r" style="left:874px;top:214px;width:46px;height:29px;background:#efefef;border:1.5px solid #a2a2a2"></div><div class="t" style="left:885px;top:224px;font-size:13px;color:#333;letter-spacing:1px">. . .</div><div class="t" style="left:943px;top:221px;font-size:18px;color:#111;;width:41.02px;text-align:justify;text-align-last:justify">月份:</div><div class="r" style="left:995px;top:212px;width:150px;height:31px;background:#fff;border:1.5px solid #8a8a8a"></div><div class="t" style="left:998px;top:218px;font-size:15.5px;color:#111;-webkit-text-stroke:0;font-family:'Liberation Mono', monospace">2021-03</div><div class="r" style="left:1155px;top:215px;width:110px;height:32px;background:#e1e1e1;border:1px solid #adadad"></div><div class="t" style="left:1190px;top:221px;font-size:19px;color:#111;;width:38.00px;text-align:justify;text-align-last:justify">查询</div><div class="r" style="left:281px;top:269px;width:1118px;height:62px;background:#ffffff;border-top:2px solid #a0a0a0;border-left:2px solid #a0a0a0"></div><div class="r" style="left:311px;top:271px;width:1px;height:60px;background:#d0d0d0;"></div><div class="r" style="left:401px;top:271px;width:1px;height:60px;background:#d0d0d0;"></div><div class="r" style="left:521px;top:271px;width:1px;height:60px;background:#d0d0d0;"></div><div class="r" style="left:641px;top:271px;width:1px;height:60px;background:#d0d0d0;"></div><div class="r" style="left:761px;top:271px;width:1px;height:60px;background:#d0d0d0;"></div><div class="r" style="left:911px;top:271px;width:1px;height:60px;background:#d0d0d0;"></div><div class="r" style="left:956px;top:271px;width:1px;height:60px;background:#d0d0d0;"></div><div class="r" style="left:1001px;top:271px;width:1px;height:60px;background:#d0d0d0;"></div><div class="r" style="left:1046px;top:271px;width:1px;height:60px;background:#d0d0d0;"></div><div class="r" style="left:1091px;top:271px;width:1px;height:60px;background:#d0d0d0;"></div><div class="r" style="left:1136px;top:271px;width:1px;height:60px;background:#d0d0d0;"></div><div class="r" style="left:1181px;top:271px;width:1px;height:60px;background:#d0d0d0;"></div><div class="r" style="left:1226px;top:271px;width:1px;height:60px;background:#d0d0d0;"></div><div class="r" style="left:1271px;top:271px;width:1px;height:60px;background:#d0d0d0;"></div><div class="r" style="left:1316px;top:271px;width:1px;height:60px;background:#d0d0d0;"></div><div class="r" style="left:1361px;top:271px;width:1px;height:60px;background:#d0d0d0;"></div><div class="r" style="left:1406px;top:271px;width:1px;height:60px;background:#d0d0d0;"></div><div class="r" style="left:1451px;top:271px;width:1px;height:60px;background:#d0d0d0;"></div><div class="r" style="left:283px;top:299px;width:1116px;height:1px;background:#a8a8a8;"></div><div class="r" style="left:283px;top:329px;width:1116px;height:2px;background:#b8b8b8;"></div><div class="r" style="left:311px;top:300px;width:1088px;height:29px;background:linear-gradient(#ffffff 40%, #ececec);"></div><div class="r" style="left:311px;top:300px;width:1px;height:29px;background:#a8a8a8;"></div><div class="r" style="left:401px;top:300px;width:1px;height:29px;background:#a8a8a8;"></div><div class="r" style="left:521px;top:300px;width:1px;height:29px;background:#a8a8a8;"></div><div class="r" style="left:641px;top:300px;width:1px;height:29px;background:#a8a8a8;"></div><div class="r" style="left:761px;top:300px;width:1px;height:29px;background:#a8a8a8;"></div><div class="r" style="left:911px;top:300px;width:1px;height:29px;background:#a8a8a8;"></div><div class="r" style="left:956px;top:300px;width:1px;height:29px;background:#a8a8a8;"></div><div class="r" style="left:1001px;top:300px;width:1px;height:29px;background:#a8a8a8;"></div><div class="r" style="left:1046px;top:300px;width:1px;height:29px;background:#a8a8a8;"></div><div class="r" style="left:1091px;top:300px;width:1px;height:29px;background:#a8a8a8;"></div><div class="r" style="left:1136px;top:300px;width:1px;height:29px;background:#a8a8a8;"></div><div class="r" style="left:1181px;top:300px;width:1px;height:29px;background:#a8a8a8;"></div><div class="r" style="left:1226px;top:300px;width:1px;height:29px;background:#a8a8a8;"></div><div class="r" style="left:1271px;top:300px;width:1px;height:29px;background:#a8a8a8;"></div><div class="r" style="left:1316px;top:300px;width:1px;height:29px;background:#a8a8a8;"></div><div class="r" style="left:1361px;top:300px;width:1px;height:29px;background:#a8a8a8;"></div><div class="r" style="left:1406px;top:300px;width:1px;height:29px;background:#a8a8a8;"></div><div class="r" style="left:1451px;top:300px;width:1px;height:29px;background:#a8a8a8;"></div><div class="t" style="left:321px;top:277px;font-size:18px;color:#111;;width:36.00px;text-align:justify;text-align-last:justify">工号</div><div class="t" style="left:411px;top:277px;font-size:18px;color:#111;;width:36.00px;text-align:justify;text-align-last:justify">姓名</div><div class="t" style="left:531px;top:277px;font-size:18px;color:#111;;width:72.00px;text-align:justify;text-align-last:justify">部门名称</div><div class="t" style="left:651px;top:277px;font-size:18px;color:#111;;width:72.00px;text-align:justify;text-align-last:justify">聘用日期</div><div class="t" style="left:771px;top:277px;font-size:18px;color:#111;;width:36.00px;text-align:justify;text-align-last:justify">月份</div><div class="t" style="left:920px;top:279px;font-size:16px;color:#111;-webkit-text-stroke:0;font-family:'Liberation Mono', monospace">1</div><div class="t" style="left:965px;top:279px;font-size:16px;color:#111;-webkit-text-stroke:0;font-family:'Liberation Mono', monospace">2</div><div class="t" style="left:1010px;top:279px;font-size:16px;color:#111;-webkit-text-stroke:0;font-family:'Liberation Mono', monospace">3</div><div class="t" style="left:1055px;top:279px;font-size:16px;color:#111;-webkit-text-stroke:0;font-family:'Liberation Mono', monospace">4</div><div class="t" style="left:1100px;top:279px;font-size:16px;color:#111;-webkit-text-stroke:0;font-family:'Liberation Mono', monospace">5</div><div class="t" style="left:1145px;top:279px;font-size:16px;color:#111;-webkit-text-stroke:0;font-family:'Liberation Mono', monospace">6</div><div class="t" style="left:1190px;top:279px;font-size:16px;color:#111;-webkit-text-stroke:0;font-family:'Liberation Mono', monospace">7</div><div class="t" style="left:1235px;top:279px;font-size:16px;color:#111;-webkit-text-stroke:0;font-family:'Liberation Mono', monospace">8</div><div class="t" style="left:1280px;top:279px;font-size:16px;color:#111;-webkit-text-stroke:0;font-family:'Liberation Mono', monospace">9</div><div class="t" style="left:1327px;top:279px;font-size:16px;color:#111;-webkit-text-stroke:0;font-family:'Liberation Mono', monospace">10</div><div class="t" style="left:1372px;top:279px;font-size:16px;color:#111;-webkit-text-stroke:0;font-family:'Liberation Mono', monospace">11</div><div class="t" style="left:313px;top:311px;font-size:15px;color:#111;-webkit-text-stroke:0;font-family:'Liberation Mono', monospace">0001</div><div class="t" style="left:404px;top:310px;font-size:17px;color:#111;font-family:'Liberation Sans', sans-serif;width:34.00px;text-align:justify;text-align-last:justify">张奇</div><div class="t" style="left:524px;top:310px;font-size:17px;color:#111;font-family:'Liberation Sans', sans-serif;width:51.00px;text-align:justify;text-align-last:justify">总经办</div><div class="t" style="left:644px;top:311px;font-size:15px;color:#111;-webkit-text-stroke:0;font-family:'Liberation Mono', monospace">2021-01-04</div><div class="t" style="left:764px;top:311px;font-size:15px;color:#111;-webkit-text-stroke:0;font-family:'Liberation Mono', monospace">202103</div><div class="t" style="left:914px;top:311px;font-size:15px;color:#111;-webkit-text-stroke:0;font-family:'Liberation Mono', monospace">000</div><div class="t" style="left:959px;top:311px;font-size:15px;color:#111;-webkit-text-stroke:0;font-family:'Liberation Mono', monospace">000</div><div class="t" style="left:1004px;top:311px;font-size:15px;color:#111;-webkit-text-stroke:0;font-family:'Liberation Mono', monospace">000</div><div class="t" style="left:1049px;top:311px;font-size:15px;color:#111;-webkit-text-stroke:0;font-family:'Liberation Mono', monospace">000</div><div class="t" style="left:1094px;top:311px;font-size:15px;color:#111;-webkit-text-stroke:0;font-family:'Liberation Mono', monospace">000</div><div class="r" style="left:1137px;top:300px;width:44px;height:29px;background:#c8c8c8;"></div><div class="t" style="left:1139px;top:311px;font-size:15px;color:#111;-webkit-text-stroke:0;font-family:'Liberation Mono', monospace;-webkit-text-stroke:0.45px currentColor">Rest</div><div class="r" style="left:1182px;top:300px;width:44px;height:29px;background:#c8c8c8;"></div><div class="t" style="left:1184px;top:311px;font-size:15px;color:#111;-webkit-text-stroke:0;font-family:'Liberation Mono', monospace;-webkit-text-stroke:0.45px currentColor">Rest</div><div class="t" style="left:1229px;top:311px;font-size:15px;color:#111;-webkit-text-stroke:0;font-family:'Liberation Mono', monospace">000</div><div class="t" style="left:1274px;top:311px;font-size:15px;color:#111;-webkit-text-stroke:0;font-family:'Liberation Mono', monospace">000</div><div class="t" style="left:1319px;top:311px;font-size:15px;color:#111;-webkit-text-stroke:0;font-family:'Liberation Mono', monospace">000</div><div class="t" style="left:1364px;top:311px;font-size:15px;color:#111;-webkit-text-stroke:0;font-family:'Liberation Mono', monospace">000</div><div class="r" style="left:268px;top:330px;width:1131px;height:624px;background:#b4b4b4;border-left:1px solid #5a5a5a;border-top:1px solid #5a5a5a"></div><div class="r" style="left:269px;top:331px;width:1130px;height:46px;background:#ffffff;"></div><svg style="left:282px;top:342px" width="22" height="22" viewBox="0 0 22 22">
<rect x="0.5" y="0.5" width="21" height="21" fill="#f2f2f2" stroke="#c8c8c8"/>
<rect x="2" y="7" width="7" height="12" fill="#c83a3a"/>
<rect x="3.5" y="10" width="3" height="3" fill="#f0d0d0"/>
<rect x="10" y="2" width="10" height="10" fill="#f3c21a"/>
<rect x="10" y="14" width="10" height="6" fill="#4a8ee6"/>
</svg><div class="t" style="left:310px;top:345px;font-size:18px;color:#111;;width:72.00px;text-align:justify;text-align-last:justify">排班管理</div><div class="t" style="left:292px;top:408px;font-size:21px;color:#222;;width:42.00px;text-align:justify;text-align-last:justify">工号</div><div class="r" style="left:362px;top:403px;width:237px;height:31px;background:#fff;border:1px solid #6e6e6e"></div><div class="r" style="left:611px;top:404px;width:44px;height:29px;background:#dcdcdc;"></div><div class="t" style="left:621px;top:413px;font-size:13px;color:#333;letter-spacing:1px">. . .</div><div class="t" style="left:693px;top:410px;font-size:18px;color:#111;;width:41.02px;text-align:justify;text-align-last:justify">月份:</div><div class="r" style="left:745px;top:404px;width:149px;height:31px;background:#fff;border:1px solid #6e6e6e"></div><div class="t" style="left:749px;top:410px;font-size:15.5px;color:#111;-webkit-text-stroke:0;font-family:'Liberation Mono', monospace">2021-03</div><div class="r" style="left:964px;top:404px;width:111px;height:40px;background:#e1e1e1;"></div><div class="t" style="left:983px;top:416px;font-size:18px;color:#111;;width:72.00px;text-align:justify;text-align-last:justify">快速排班</div><div class="r" style="left:1096px;top:386px;width:294px;height:25px;background:#e3e3e3;"></div><div class="r" style="left:1097px;top:425px;width:107px;height:31px;background:#ececec;border:1px solid #f6f6f6"></div><div class="t" style="left:1131px;top:431px;font-size:18px;color:#111;;width:36.00px;text-align:justify;text-align-last:justify">确定</div><div class="r" style="left:1261px;top:425px;width:107px;height:31px;background:#e1e1e1;"></div><div class="t" style="left:1295px;top:431px;font-size:18px;color:#111;;width:36.00px;text-align:justify;text-align-last:justify">取消</div><div class="r" style="left:281px;top:471px;width:796px;height:483px;background:#a8a8a8;"></div><div class="r" style="left:284px;top:471px;width:110px;height:44px;background:#e3e3e3;"></div><div class="t" style="left:311px;top:485px;font-size:18px;color:#111;;width:54.00px;text-align:justify;text-align-last:justify">星期日</div><div class="r" style="left:396px;top:471px;width:112px;height:44px;background:#e3e3e3;"></div><div class="t" style="left:425px;top:485px;font-size:18px;color:#111;;width:54.00px;text-align:justify;text-align-last:justify">星期一</div><div class="r" style="left:509px;top:471px;width:112px;height:44px;background:#e3e3e3;"></div><div class="t" style="left:538px;top:485px;font-size:18px;color:#111;;width:54.00px;text-align:justify;text-align-last:justify">星期二</div><div class="r" style="left:623px;top:471px;width:112px;height:44px;background:#e3e3e3;"></div><div class="t" style="left:652px;top:485px;font-size:18px;color:#111;;width:54.00px;text-align:justify;text-align-last:justify">星期三</div><div class="r" style="left:737px;top:471px;width:112px;height:44px;background:#e3e3e3;"></div><div class="t" style="left:766px;top:485px;font-size:18px;color:#111;;width:54.00px;text-align:justify;text-align-last:justify">星期四</div><div class="r" style="left:851px;top:471px;width:112px;height:44px;background:#e3e3e3;"></div><div class="t" style="left:879px;top:485px;font-size:18px;color:#111;;width:54.00px;text-align:justify;text-align-last:justify">星期五</div><div class="r" style="left:964px;top:471px;width:112px;height:44px;background:#e3e3e3;"></div><div class="t" style="left:993px;top:485px;font-size:18px;color:#111;;width:54.00px;text-align:justify;text-align-last:justify">星期六</div><div class="r" style="left:281px;top:517px;width:114px;height:84px;background:#acacac;"></div><div class="r" style="left:396px;top:517px;width:112px;height:84px;background:#ffffff;"></div><div class="t" style="left:405px;top:526px;font-size:15px;color:#0000e8;-webkit-text-stroke:0;font-family:'Liberation Mono', monospace">1</div><div class="t" style="left:465px;top:526px;font-size:15px;color:#0000e8;-webkit-text-stroke:0;font-family:'Liberation Mono', monospace">000</div><div class="t" style="left:405px;top:578px;font-size:18px;color:#0000e8;-webkit-text-stroke:0.15px currentColor;width:36.00px;text-align:justify;text-align-last:justify">外勤</div><div class="r" style="left:509px;top:517px;width:113px;height:84px;background:#ffffff;"></div><div class="t" style="left:518px;top:526px;font-size:15px;color:#0000e8;-webkit-text-stroke:0;font-family:'Liberation Mono', monospace">2</div><div class="t" style="left:579px;top:526px;font-size:15px;color:#0000e8;-webkit-text-stroke:0;font-family:'Liberation Mono', monospace">000</div><div class="t" style="left:518px;top:578px;font-size:18px;color:#0000e8;-webkit-text-stroke:0.15px currentColor;width:36.00px;text-align:justify;text-align-last:justify">外勤</div><div class="r" style="left:623px;top:517px;width:113px;height:84px;background:#ffffff;"></div><div class="t" style="left:632px;top:526px;font-size:15px;color:#0000e8;-webkit-text-stroke:0;font-family:'Liberation Mono', monospace">3</div><div class="t" style="left:693px;top:526px;font-size:15px;color:#0000e8;-webkit-text-stroke:0;font-family:'Liberation Mono', monospace">000</div><div class="t" style="left:632px;top:578px;font-size:18px;color:#0000e8;-webkit-text-stroke:0.15px currentColor;width:36.00px;text-align:justify;text-align-last:justify">外勤</div><div class="r" style="left:737px;top:517px;width:113px;height:84px;background:#ffffff;"></div><div class="t" style="left:746px;top:526px;font-size:15px;color:#0000e8;-webkit-text-stroke:0;font-family:'Liberation Mono', monospace">4</div><div class="t" style="left:807px;top:526px;font-size:15px;color:#0000e8;-webkit-text-stroke:0;font-family:'Liberation Mono', monospace">000</div><div class="t" style="left:746px;top:578px;font-size:18px;color:#0000e8;-webkit-text-stroke:0.15px currentColor;width:36.00px;text-align:justify;text-align-last:justify">外勤</div><div class="r" style="left:851px;top:517px;width:112px;height:84px;background:#ffffff;"></div><div class="t" style="left:860px;top:526px;font-size:15px;color:#0000e8;-webkit-text-stroke:0;font-family:'Liberation Mono', monospace">5</div><div class="t" style="left:920px;top:526px;font-size:15px;color:#0000e8;-webkit-text-stroke:0;font-family:'Liberation Mono', monospace">000</div><div class="t" style="left:860px;top:578px;font-size:18px;color:#0000e8;-webkit-text-stroke:0.15px currentColor;width:36.00px;text-align:justify;text-align-last:justify">外勤</div><div class="r" style="left:964px;top:517px;width:113px;height:84px;background:#ffffff;"></div><div class="t" style="left:973px;top:526px;font-size:15px;color:#0000e8;-webkit-text-stroke:0;font-family:'Liberation Mono', monospace">6</div><div class="t" style="left:1027px;top:526px;font-size:15px;color:#0000e8;-webkit-text-stroke:0;font-family:'Liberation Mono', monospace;-webkit-text-stroke:0.45px currentColor">Rest</div><div class="t" style="left:973px;top:578px;font-size:18px;color:#0000e8;-webkit-text-stroke:0.15px currentColor;width:36.00px;text-align:justify;text-align-last:justify">休息</div><div class="r" style="left:281px;top:602px;width:114px;height:84px;background:#ffffff;"></div><div class="t" style="left:290px;top:611px;font-size:15px;color:#0000e8;-webkit-text-stroke:0;font-family:'Liberation Mono', monospace">7</div><div class="t" style="left:345px;top:611px;font-size:15px;color:#0000e8;-webkit-text-stroke:0;font-family:'Liberation Mono', monospace;-webkit-text-stroke:0.45px currentColor">Rest</div><div class="t" style="left:290px;top:663px;font-size:18px;color:#0000e8;-webkit-text-stroke:0.15px currentColor;width:36.00px;text-align:justify;text-align-last:justify">休息</div><div class="r" style="left:396px;top:602px;width:112px;height:84px;background:#ffffff;"></div><div class="t" style="left:405px;top:611px;font-size:15px;color:#0000e8;-webkit-text-stroke:0;font-family:'Liberation Mono', monospace">8</div><div class="t" style="left:456px;top:611px;font-size:15px;color:#0000e8;-webkit-text-stroke:0;font-family:'Liberation Mono', monospace">0001</div><div class="t" style="left:405px;top:663px;font-size:18px;color:#0000e8;-webkit-text-stroke:0.15px currentColor;width:72.00px;text-align:justify;text-align-last:justify">生产车间</div><div class="r" style="left:509px;top:602px;width:113px;height:84px;background:#ffffff;"></div><div class="t" style="left:518px;top:611px;font-size:15px;color:#0000e8;-webkit-text-stroke:0;font-family:'Liberation Mono', monospace">9</div><div class="t" style="left:570px;top:611px;font-size:15px;color:#0000e8;-webkit-text-stroke:0;font-family:'Liberation Mono', monospace">0001</div><div class="t" style="left:518px;top:663px;font-size:18px;color:#0000e8;-webkit-text-stroke:0.15px currentColor;width:72.00px;text-align:justify;text-align-last:justify">生产车间</div><div class="r" style="left:623px;top:602px;width:113px;height:84px;background:#ffffff;"></div><div class="t" style="left:632px;top:611px;font-size:15px;color:#0000e8;-webkit-text-stroke:0;font-family:'Liberation Mono', monospace">10</div><div class="t" style="left:684px;top:611px;font-size:15px;color:#0000e8;-webkit-text-stroke:0;font-family:'Liberation Mono', monospace">0001</div><div class="t" style="left:632px;top:663px;font-size:18px;color:#0000e8;-webkit-text-stroke:0.15px currentColor;width:72.00px;text-align:justify;text-align-last:justify">生产车间</div><div class="r" style="left:737px;top:602px;width:113px;height:84px;background:#ffffff;"></div><div class="t" style="left:746px;top:611px;font-size:15px;color:#0000e8;-webkit-text-stroke:0;font-family:'Liberation Mono', monospace">11</div><div class="t" style="left:798px;top:611px;font-size:15px;color:#0000e8;-webkit-text-stroke:0;font-family:'Liberation Mono', monospace">0001</div><div class="t" style="left:746px;top:663px;font-size:18px;color:#0000e8;-webkit-text-stroke:0.15px currentColor;width:72.00px;text-align:justify;text-align-last:justify">生产车间</div><div class="r" style="left:851px;top:602px;width:112px;height:84px;background:#ffffff;"></div><div class="t" style="left:860px;top:611px;font-size:15px;color:#0000e8;-webkit-text-stroke:0;font-family:'Liberation Mono', monospace">12</div><div class="t" style="left:911px;top:611px;font-size:15px;color:#0000e8;-webkit-text-stroke:0;font-family:'Liberation Mono', monospace">0001</div><div class="t" style="left:860px;top:663px;font-size:18px;color:#0000e8;-webkit-text-stroke:0.15px currentColor;width:72.00px;text-align:justify;text-align-last:justify">生产车间</div><div class="r" style="left:964px;top:602px;width:113px;height:84px;background:#ffffff;"></div><div class="t" style="left:973px;top:611px;font-size:15px;color:#0000e8;-webkit-text-stroke:0;font-family:'Liberation Mono', monospace">13</div><div class="t" style="left:1027px;top:611px;font-size:15px;color:#0000e8;-webkit-text-stroke:0;font-family:'Liberation Mono', monospace;-webkit-text-stroke:0.45px currentColor">Rest</div><div class="t" style="left:973px;top:663px;font-size:18px;color:#0000e8;-webkit-text-stroke:0.15px currentColor;width:36.00px;text-align:justify;text-align-last:justify">休息</div><div class="r" style="left:281px;top:687px;width:114px;height:84px;background:#ffffff;"></div><div class="t" style="left:290px;top:696px;font-size:15px;color:#0000e8;-webkit-text-stroke:0;font-family:'Liberation Mono', monospace">14</div><div class="t" style="left:345px;top:696px;font-size:15px;color:#0000e8;-webkit-text-stroke:0;font-family:'Liberation Mono', monospace;-webkit-text-stroke:0.45px currentColor">Rest</div><div class="t" style="left:290px;top:748px;font-size:18px;color:#0000e8;-webkit-text-stroke:0.15px currentColor;width:36.00px;text-align:justify;text-align-last:justify">休息</div><div class="r" style="left:396px;top:687px;width:112px;height:84px;background:#ffffff;"></div><div class="t" style="left:405px;top:696px;font-size:15px;color:#0000e8;-webkit-text-stroke:0;font-family:'Liberation Mono', monospace">15</div><div class="t" style="left:456px;top:696px;font-size:15px;color:#0000e8;-webkit-text-stroke:0;font-family:'Liberation Mono', monospace">0001</div><div class="t" style="left:405px;top:748px;font-size:18px;color:#0000e8;-webkit-text-stroke:0.15px currentColor;width:72.00px;text-align:justify;text-align-last:justify">生产车间</div><div class="r" style="left:509px;top:687px;width:113px;height:84px;background:#ffffff;"></div><div class="t" style="left:518px;top:696px;font-size:15px;color:#0000e8;-webkit-text-stroke:0;font-family:'Liberation Mono', monospace">16</div><div class="t" style="left:570px;top:696px;font-size:15px;color:#0000e8;-webkit-text-stroke:0;font-family:'Liberation Mono', monospace">0001</div><div class="t" style="left:518px;top:748px;font-size:18px;color:#0000e8;-webkit-text-stroke:0.15px currentColor;width:72.00px;text-align:justify;text-align-last:justify">生产车间</div><div class="r" style="left:623px;top:687px;width:113px;height:84px;background:#ffffff;"></div><div class="t" style="left:632px;top:696px;font-size:15px;color:#0000e8;-webkit-text-stroke:0;font-family:'Liberation Mono', monospace">17</div><div class="t" style="left:684px;top:696px;font-size:15px;color:#0000e8;-webkit-text-stroke:0;font-family:'Liberation Mono', monospace">0001</div><div class="t" style="left:632px;top:748px;font-size:18px;color:#0000e8;-webkit-text-stroke:0.15px currentColor;width:72.00px;text-align:justify;text-align-last:justify">生产车间</div><div class="r" style="left:737px;top:687px;width:113px;height:84px;background:#ffffff;"></div><div class="t" style="left:746px;top:696px;font-size:15px;color:#0000e8;-webkit-text-stroke:0;font-family:'Liberation Mono', monospace">18</div><div class="t" style="left:798px;top:696px;font-size:15px;color:#0000e8;-webkit-text-stroke:0;font-family:'Liberation Mono', monospace">0001</div><div class="t" style="left:746px;top:748px;font-size:18px;color:#0000e8;-webkit-text-stroke:0.15px currentColor;width:72.00px;text-align:justify;text-align-last:justify">生产车间</div><div class="r" style="left:851px;top:687px;width:112px;height:84px;background:#ffffff;"></div><div class="t" style="left:860px;top:696px;font-size:15px;color:#0000e8;-webkit-text-stroke:0;font-family:'Liberation Mono', monospace">19</div><div class="t" style="left:911px;top:696px;font-size:15px;color:#0000e8;-webkit-text-stroke:0;font-family:'Liberation Mono', monospace">0002</div><div class="t" style="left:860px;top:748px;font-size:18px;color:#0000e8;-webkit-text-stroke:0.15px currentColor;width:90.00px;text-align:justify;text-align-last:justify">生产车间浮</div><div class="r" style="left:964px;top:687px;width:113px;height:84px;background:#ffffff;"></div><div class="t" style="left:973px;top:696px;font-size:15px;color:#0000e8;-webkit-text-stroke:0;font-family:'Liberation Mono', monospace">20</div><div class="t" style="left:1027px;top:696px;font-size:15px;color:#0000e8;-webkit-text-stroke:0;font-family:'Liberation Mono', monospace;-webkit-text-stroke:0.45px currentColor">Rest</div><div class="t" style="left:973px;top:748px;font-size:18px;color:#0000e8;-webkit-text-stroke:0.15px currentColor;width:36.00px;text-align:justify;text-align-last:justify">休息</div><div class="r" style="left:281px;top:772px;width:114px;height:85px;background:#ffffff;"></div><div class="t" style="left:290px;top:781px;font-size:15px;color:#0000e8;-webkit-text-stroke:0;font-family:'Liberation Mono', monospace">21</div><div class="t" style="left:352px;top:781px;font-size:15px;color:#0000e8;-webkit-text-stroke:0;font-family:'Liberation Mono', monospace">002</div><div class="t" style="left:290px;top:833px;font-size:18px;color:#0000e8;-webkit-text-stroke:0.15px currentColor;width:36.00px;text-align:justify;text-align-last:justify">夜班</div><div class="r" style="left:396px;top:772px;width:112px;height:85px;background:#ffffff;"></div><div class="t" style="left:405px;top:781px;font-size:15px;color:#0000e8;-webkit-text-stroke:0;font-family:'Liberation Mono', monospace">22</div><div class="t" style="left:465px;top:781px;font-size:15px;color:#0000e8;-webkit-text-stroke:0;font-family:'Liberation Mono', monospace">002</div><div class="t" style="left:405px;top:833px;font-size:18px;color:#0000e8;-webkit-text-stroke:0.15px currentColor;width:36.00px;text-align:justify;text-align-last:justify">夜班</div><div class="r" style="left:509px;top:772px;width:113px;height:85px;background:#ffffff;"></div><div class="t" style="left:518px;top:781px;font-size:15px;color:#0000e8;-webkit-text-stroke:0;font-family:'Liberation Mono', monospace">23</div><div class="t" style="left:579px;top:781px;font-size:15px;color:#0000e8;-webkit-text-stroke:0;font-family:'Liberation Mono', monospace">002</div><div class="t" style="left:518px;top:833px;font-size:18px;color:#0000e8;-webkit-text-stroke:0.15px currentColor;width:36.00px;text-align:justify;text-align-last:justify">夜班</div><div class="r" style="left:623px;top:772px;width:113px;height:85px;background:#ffffff;"></div><div class="t" style="left:632px;top:781px;font-size:15px;color:#0000e8;-webkit-text-stroke:0;font-family:'Liberation Mono', monospace">24</div><div class="t" style="left:693px;top:781px;font-size:15px;color:#0000e8;-webkit-text-stroke:0;font-family:'Liberation Mono', monospace">002</div><div class="t" style="left:632px;top:833px;font-size:18px;color:#0000e8;-webkit-text-stroke:0.15px currentColor;width:36.00px;text-align:justify;text-align-last:justify">夜班</div><div class="r" style="left:737px;top:772px;width:113px;height:85px;background:#ffffff;"></div><div class="t" style="left:746px;top:781px;font-size:15px;color:#0000e8;-webkit-text-stroke:0;font-family:'Liberation Mono', monospace">25</div><div class="t" style="left:807px;top:781px;font-size:15px;color:#0000e8;-webkit-text-stroke:0;font-family:'Liberation Mono', monospace">002</div><div class="t" style="left:746px;top:833px;font-size:18px;color:#0000e8;-webkit-text-stroke:0.15px currentColor;width:36.00px;text-align:justify;text-align-last:justify">夜班</div><div class="r" style="left:851px;top:772px;width:112px;height:85px;background:#ffffff;"></div><div class="t" style="left:860px;top:781px;font-size:15px;color:#0000e8;-webkit-text-stroke:0;font-family:'Liberation Mono', monospace">26</div><div class="t" style="left:920px;top:781px;font-size:15px;color:#0000e8;-webkit-text-stroke:0;font-family:'Liberation Mono', monospace">002</div><div class="t" style="left:860px;top:833px;font-size:18px;color:#0000e8;-webkit-text-stroke:0.15px currentColor;width:36.00px;text-align:justify;text-align-last:justify">夜班</div><div class="r" style="left:964px;top:772px;width:113px;height:85px;background:#ffffff;"></div><div class="t" style="left:973px;top:781px;font-size:15px;color:#0000e8;-webkit-text-stroke:0;font-family:'Liberation Mono', monospace">27</div><div class="t" style="left:1027px;top:781px;font-size:15px;color:#0000e8;-webkit-text-stroke:0;font-family:'Liberation Mono', monospace;-webkit-text-stroke:0.45px currentColor">Rest</div><div class="t" style="left:973px;top:833px;font-size:18px;color:#0000e8;-webkit-text-stroke:0.15px currentColor;width:36.00px;text-align:justify;text-align-last:justify">休息</div><div class="r" style="left:281px;top:858px;width:114px;height:84px;background:#ffffff;"></div><div class="t" style="left:290px;top:867px;font-size:15px;color:#0000e8;-webkit-text-stroke:0;font-family:'Liberation Mono', monospace">28</div><div class="t" style="left:345px;top:867px;font-size:15px;color:#0000e8;-webkit-text-stroke:0;font-family:'Liberation Mono', monospace;-webkit-text-stroke:0.45px currentColor">Rest</div><div class="t" style="left:290px;top:919px;font-size:18px;color:#0000e8;-webkit-text-stroke:0.15px currentColor;width:36.00px;text-align:justify;text-align-last:justify">休息</div><div class="r" style="left:396px;top:858px;width:112px;height:84px;background:#ffffff;"></div><div class="t" style="left:405px;top:867px;font-size:15px;color:#0000e8;-webkit-text-stroke:0;font-family:'Liberation Mono', monospace">29</div><div class="t" style="left:465px;top:867px;font-size:15px;color:#0000e8;-webkit-text-stroke:0;font-family:'Liberation Mono', monospace">002</div><div class="t" style="left:405px;top:919px;font-size:18px;color:#0000e8;-webkit-text-stroke:0.15px currentColor;width:36.00px;text-align:justify;text-align-last:justify">夜班</div><div class="r" style="left:509px;top:858px;width:113px;height:84px;background:#ffffff;"></div><div class="t" style="left:518px;top:867px;font-size:15px;color:#0000e8;-webkit-text-stroke:0;font-family:'Liberation Mono', monospace">30</div><div class="t" style="left:579px;top:867px;font-size:15px;color:#0000e8;-webkit-text-stroke:0;font-family:'Liberation Mono', monospace">002</div><div class="t" style="left:518px;top:919px;font-size:18px;color:#0000e8;-webkit-text-stroke:0.15px currentColor;width:36.00px;text-align:justify;text-align-last:justify">夜班</div><div class="r" style="left:623px;top:858px;width:113px;height:84px;background:#ffffff;"></div><div class="t" style="left:632px;top:867px;font-size:15px;color:#0000e8;-webkit-text-stroke:0;font-family:'Liberation Mono', monospace">31</div><div class="t" style="left:693px;top:867px;font-size:15px;color:#0000e8;-webkit-text-stroke:0;font-family:'Liberation Mono', monospace">002</div><div class="t" style="left:632px;top:919px;font-size:18px;color:#0000e8;-webkit-text-stroke:0.15px currentColor;width:36.00px;text-align:justify;text-align-last:justify">夜班</div><div class="r" style="left:737px;top:858px;width:113px;height:84px;background:#acacac;"></div><div class="r" style="left:851px;top:858px;width:112px;height:84px;background:#acacac;"></div><div class="r" style="left:964px;top:858px;width:113px;height:84px;background:#acacac;"></div><div class="r" style="left:281px;top:943px;width:114px;height:86px;background:#acacac;"></div><div class="r" style="left:396px;top:943px;width:112px;height:86px;background:#acacac;"></div><div class="r" style="left:509px;top:943px;width:113px;height:86px;background:#acacac;"></div><div class="r" style="left:623px;top:943px;width:113px;height:86px;background:#acacac;"></div><div class="r" style="left:737px;top:943px;width:113px;height:86px;background:#acacac;"></div><div class="r" style="left:851px;top:943px;width:112px;height:86px;background:#acacac;"></div><div class="r" style="left:964px;top:943px;width:113px;height:86px;background:#acacac;"></div><div class="r" style="left:1096px;top:470px;width:303px;height:484px;background:#ffffff;"></div><div class="r" style="left:1096px;top:470px;width:262px;height:484px;background:#ffffff;border-left:1px solid #a0a0a0;border-top:1px solid #a0a0a0"></div><div class="r" style="left:1117px;top:672px;width:240px;height:34px;background:#0078d7;"></div><div class="r" style="left:1097px;top:672px;width:20px;height:34px;background:#bcdcf4;"></div><div class="r" style="left:1117px;top:499px;width:241px;height:1px;background:#a0a0a0;"></div><div class="r" style="left:1097px;top:499px;width:20px;height:1px;background:#e6e6e6;"></div><div class="r" style="left:1117px;top:534px;width:241px;height:1px;background:#a0a0a0;"></div><div class="r" style="left:1097px;top:534px;width:20px;height:1px;background:#e6e6e6;"></div><div class="r" style="left:1117px;top:568px;width:241px;height:1px;background:#a0a0a0;"></div><div class="r" style="left:1097px;top:568px;width:20px;height:1px;background:#e6e6e6;"></div><div class="r" style="left:1117px;top:602px;width:241px;height:1px;background:#a0a0a0;"></div><div class="r" style="left:1097px;top:602px;width:20px;height:1px;background:#e6e6e6;"></div><div class="r" style="left:1117px;top:637px;width:241px;height:1px;background:#a0a0a0;"></div><div class="r" style="left:1097px;top:637px;width:20px;height:1px;background:#e6e6e6;"></div><div class="r" style="left:1117px;top:672px;width:241px;height:1px;background:#a0a0a0;"></div><div class="r" style="left:1097px;top:672px;width:20px;height:1px;background:#e6e6e6;"></div><div class="r" style="left:1117px;top:706px;width:241px;height:1px;background:#a0a0a0;"></div><div class="r" style="left:1097px;top:706px;width:20px;height:1px;background:#e6e6e6;"></div><div class="r" style="left:1117px;top:740px;width:241px;height:1px;background:#a0a0a0;"></div><div class="r" style="left:1097px;top:740px;width:20px;height:1px;background:#e6e6e6;"></div><div class="r" style="left:1117px;top:775px;width:241px;height:1px;background:#a0a0a0;"></div><div class="r" style="left:1097px;top:775px;width:20px;height:1px;background:#e6e6e6;"></div><div class="r" style="left:1117px;top:810px;width:241px;height:1px;background:#a0a0a0;"></div><div class="r" style="left:1097px;top:810px;width:20px;height:1px;background:#e6e6e6;"></div><div class="r" style="left:1117px;top:844px;width:241px;height:1px;background:#a0a0a0;"></div><div class="r" style="left:1097px;top:844px;width:20px;height:1px;background:#e6e6e6;"></div><div class="r" style="left:1117px;top:878px;width:241px;height:1px;background:#a0a0a0;"></div><div class="r" style="left:1097px;top:878px;width:20px;height:1px;background:#e6e6e6;"></div><div class="r" style="left:1117px;top:913px;width:241px;height:1px;background:#a0a0a0;"></div><div class="r" style="left:1097px;top:913px;width:20px;height:1px;background:#e6e6e6;"></div><div class="r" style="left:1117px;top:948px;width:241px;height:1px;background:#a0a0a0;"></div><div class="r" style="left:1097px;top:948px;width:20px;height:1px;background:#e6e6e6;"></div><div class="r" style="left:1117px;top:471px;width:1px;height:483px;background:#a0a0a0;"></div><div class="r" style="left:1207px;top:471px;width:1px;height:483px;background:#a0a0a0;"></div><div class="r" style="left:1357px;top:471px;width:1px;height:483px;background:#a0a0a0;"></div><div class="t" style="left:1127px;top:476px;font-size:18px;color:#111;;width:36.00px;text-align:justify;text-align-last:justify">编码</div><div class="t" style="left:1217px;top:476px;font-size:18px;color:#111;;width:72.00px;text-align:justify;text-align-last:justify">班制名称</div><div class="t" style="left:1121px;top:511px;font-size:15px;color:#111;-webkit-text-stroke:0;font-family:'Liberation Mono', monospace;-webkit-text-stroke:0.45px currentColor">Rest</div><div class="t" style="left:1211px;top:506px;font-size:18px;color:#111;;width:36.00px;text-align:justify;text-align-last:justify">休息</div><div class="t" style="left:1121px;top:546px;font-size:15px;color:#111;-webkit-text-stroke:0;font-family:'Liberation Mono', monospace">000</div><div class="t" style="left:1211px;top:541px;font-size:18px;color:#111;;width:36.00px;text-align:justify;text-align-last:justify">外勤</div><div class="t" style="left:1121px;top:580px;font-size:15px;color:#111;-webkit-text-stroke:0;font-family:'Liberation Mono', monospace">0001</div><div class="t" style="left:1211px;top:575px;font-size:18px;color:#111;;width:72.00px;text-align:justify;text-align-last:justify">生产车间</div><div class="t" style="left:1121px;top:614px;font-size:15px;color:#111;-webkit-text-stroke:0;font-family:'Liberation Mono', monospace">0002</div><div class="t" style="left:1211px;top:609px;font-size:18px;color:#111;;width:108.00px;text-align:justify;text-align-last:justify">生产车间浮动</div><div class="t" style="left:1121px;top:649px;font-size:15px;color:#111;-webkit-text-stroke:0;font-family:'Liberation Mono', monospace">001</div><div class="t" style="left:1211px;top:644px;font-size:18px;color:#111;;width:54.00px;text-align:justify;text-align-last:justify">办公室</div><div class="t" style="left:1121px;top:684px;font-size:15px;color:#ffffff;-webkit-text-stroke:0;font-family:'Liberation Mono', monospace">002</div><div class="t" style="left:1211px;top:679px;font-size:18px;color:#ffffff;;width:36.00px;text-align:justify;text-align-last:justify">夜班</div><div class="t" style="left:1121px;top:718px;font-size:15px;color:#111;-webkit-text-stroke:0;font-family:'Liberation Mono', monospace">003</div><div class="t" style="left:1211px;top:713px;font-size:18px;color:#111;;width:72.00px;text-align:justify;text-align-last:justify">司机班次</div><div class="t" style="left:1121px;top:752px;font-size:15px;color:#111;-webkit-text-stroke:0;font-family:'Liberation Mono', monospace">009</div><div class="t" style="left:1211px;top:747px;font-size:18px;color:#111;;width:108.00px;text-align:justify;text-align-last:justify">设计师组合班</div><div class="t" style="left:1121px;top:787px;font-size:15px;color:#111;-webkit-text-stroke:0;font-family:'Liberation Mono', monospace">01</div><div class="t" style="left:1211px;top:786px;font-size:16px;color:#111;-webkit-text-stroke:0;font-family:'Liberation Mono', monospace">dd</div><div class="t" style="left:1121px;top:822px;font-size:15px;color:#111;-webkit-text-stroke:0;font-family:'Liberation Mono', monospace">017</div><div class="t" style="left:1211px;top:817px;font-size:18px;color:#111;;width:72.00px;text-align:justify;text-align-last:justify">保安白班</div><div class="t" style="left:1121px;top:856px;font-size:15px;color:#111;-webkit-text-stroke:0;font-family:'Liberation Mono', monospace">019</div><div class="t" style="left:1211px;top:851px;font-size:18px;color:#111;;width:90.00px;text-align:justify;text-align-last:justify">保安组合班</div><div class="t" style="left:1121px;top:890px;font-size:15px;color:#111;-webkit-text-stroke:0;font-family:'Liberation Mono', monospace">021</div><div class="t" style="left:1211px;top:885px;font-size:18px;color:#111;;width:108.00px;text-align:justify;text-align-last:justify">保安倒班组合</div><div class="t" style="left:1121px;top:925px;font-size:15px;color:#111;-webkit-text-stroke:0;font-family:'Liberation Mono', monospace">029</div><div class="t" style="left:1211px;top:920px;font-size:18px;color:#111;;width:123.02px;text-align:justify;text-align-last:justify">模房夜班直落...</div></body></html>
